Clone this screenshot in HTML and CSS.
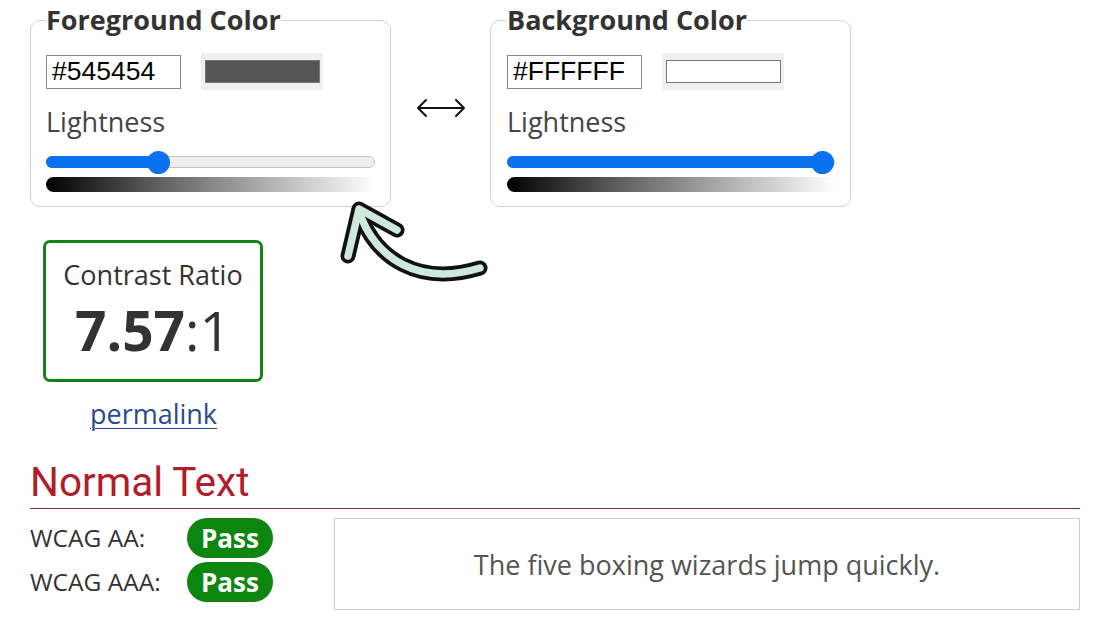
FILE: index.html
```html
<!DOCTYPE html>
<html lang="en">
<head>
<meta charset="utf-8">
<title>Contrast Checker</title>
<link rel="stylesheet" href="styles.css">
</head>
<body>
<main class="page">
  <section class="pickers">
    <fieldset class="picker">
      <legend>Foreground Color</legend>
      <div class="color-row">
        <input class="hex" type="text" value="#545454">
        <div class="swatch"><div class="swatch-fill fg-fill"></div></div>
      </div>
      <div class="label">Lightness</div>
      <div class="slider">
        <div class="fill" style="width: 34%"></div>
        <div class="thumb" style="left: 34%"></div>
      </div>
      <div class="gradient"></div>
    </fieldset>

    <div class="swap">
      <svg width="52" height="20" viewBox="0 0 52 20" aria-hidden="true">
        <path d="M3 10 H49 M11 2 L3 10 L11 18 M41 2 L49 10 L41 18" fill="none" stroke="#111" stroke-width="2" stroke-linecap="round" stroke-linejoin="round"/>
      </svg>
    </div>

    <fieldset class="picker picker-bg">
      <legend>Background Color</legend>
      <div class="color-row">
        <input class="hex" type="text" value="#FFFFFF">
        <div class="swatch"><div class="swatch-fill bg-fill"></div></div>
      </div>
      <div class="label">Lightness</div>
      <div class="slider">
        <div class="fill" style="width: 96.6%"></div>
        <div class="thumb" style="left: 96.6%"></div>
      </div>
      <div class="gradient"></div>
    </fieldset>
  </section>

  <svg class="pointer" width="170" height="100" viewBox="0 0 170 100" aria-hidden="true">
    <g fill="none" stroke-linecap="round" stroke-linejoin="round">
      <path d="M18 61 L29 14 L67 35" stroke="#111" stroke-width="15"/>
      <path d="M31 22 C47 62 87 92 150 73" stroke="#111" stroke-width="15"/>
      <path d="M18 61 L29 14 L67 35" stroke="#cfe8dd" stroke-width="7.5"/>
      <path d="M31 22 C47 62 87 92 150 73" stroke="#cfe8dd" stroke-width="7.5"/>
    </g>
  </svg>

  <section class="result">
    <div class="ratio-box">
      <div class="ratio-title">Contrast Ratio</div>
      <div class="ratio-value"><b>7.57</b>:1</div>
    </div>
    <a class="permalink" href="#">permalink</a>
  </section>

  <h2 class="section-title">Normal Text</h2>
  <section class="checks">
    <div class="levels">
      <div class="level"><span class="level-name">WCAG AA:</span><span class="badge">Pass</span></div>
      <div class="level"><span class="level-name">WCAG AAA:</span><span class="badge">Pass</span></div>
    </div>
    <div class="sample">The five boxing wizards jump quickly.</div>
  </section>
</main>
</body>
</html>
```
FILE: styles.css
```css
* { box-sizing: border-box; }

html, body {
  margin: 0;
  background: #fff;
}

body {
  font-family: "Open Sans", "Liberation Sans", sans-serif;
  color: #333;
}

.page {
  position: relative;
  width: 1050px;
  margin-left: 30px;
  padding-top: 4px;
}

.pickers {
  display: flex;
  align-items: center;
}

.picker {
  width: 361px;
  margin: 0;
  padding: 0 15px 14px 15px;
  border: 1px solid #d2d2d2;
  border-radius: 10px;
  min-width: 0;
}

.picker-bg {
  padding-left: 16px;
  padding-right: 15px;
}

.picker legend {
  padding: 0;
  font-size: 27px;
  font-weight: 700;
  line-height: 32px;
  color: #333;
}

.color-row {
  display: flex;
  align-items: center;
  gap: 20px;
  margin-top: 17px;
  height: 37px;
}

.hex {
  width: 135px;
  height: 34px;
  margin: 0;
  padding: 0 5px;
  border: 1px solid #8a8a8a;
  border-radius: 0;
  font-family: "Liberation Sans", Arial, sans-serif;
  font-size: 26.5px;
  color: #000;
  background: #fff;
  outline: none;
}

.swatch {
  width: 122px;
  height: 37px;
  padding: 7px 3px 7px 4px;
  background: #efefef;
}

.swatch-fill {
  width: 100%;
  height: 100%;
  border: 1px solid #777;
}

.fg-fill { background: #545454; }
.bg-fill { background: #ffffff; }

.label {
  margin-top: 15px;
  font-size: 27px;
  line-height: 34px;
  color: #444;
}

.slider {
  position: relative;
  margin-top: 17px;
  height: 12px;
  border: 1px solid #c4c4c4;
  border-radius: 6px;
  background: #efefef;
}

.fill {
  height: 12px;
  margin: -1px 0 0 -1px;
  border-radius: 6px 0 0 6px;
  background: #0b72ef;
}

.thumb {
  position: absolute;
  top: 50%;
  width: 23px;
  height: 23px;
  margin: -11.5px 0 0 -11.5px;
  border-radius: 50%;
  background: #0b72ef;
}

.gradient {
  margin-top: 9px;
  height: 15px;
  border-radius: 8px 0 0 8px;
  background: linear-gradient(to right, #000 0%, #555 30%, #aaa 65%, #fff 100%);
}

.swap {
  width: 99px;
  display: flex;
  justify-content: center;
  padding-top: 4px;
}

.pointer {
  position: absolute;
  left: 300px;
  top: 195px;
}

.result {
  width: 233px;
  margin-top: 33px;
  display: flex;
  flex-direction: column;
  align-items: center;
}

.ratio-box {
  margin-left: 13px;
  width: 220px;
  height: 142px;
  border: 3px solid #18801b;
  border-radius: 7px;
  padding-top: 14px;
  text-align: center;
  color: #333;
}

.ratio-title {
  font-size: 27px;
  line-height: 36px;
}

.ratio-value {
  margin-top: 4px;
  font-size: 55px;
  line-height: 66px;
}

.ratio-value b { font-weight: 700; }

.permalink {
  margin: 14px 0 0 14px;
  font-size: 27px;
  line-height: 36px;
  color: #2a4a8c;
  text-decoration: underline;
  text-underline-offset: 4px;
  text-decoration-thickness: 1px;
}

.section-title {
  margin: 26px 0 0 0;
  padding-bottom: 2px;
  font-family: Roboto, "Liberation Sans", sans-serif;
  font-weight: 400;
  font-size: 40.5px;
  line-height: 48px;
  color: #b01e2b;
  border-bottom: 1px solid #8e2f33;
}

.checks {
  display: flex;
  margin-top: 9px;
}

.levels {
  display: flex;
  flex-direction: column;
  gap: 4px;
}

.level {
  display: flex;
  align-items: center;
  height: 40px;
}

.level-name {
  width: 157px;
  font-size: 24.5px;
  line-height: 40px;
  color: #333;
}

.badge {
  width: 86px;
  height: 40px;
  border-radius: 20px;
  background: #0c860e;
  color: #fff;
  font-weight: 700;
  font-size: 26px;
  line-height: 40px;
  text-align: center;
}

.sample {
  margin-left: 61px;
  flex: 1;
  height: 92px;
  border: 1px solid #cfcfcf;
  display: flex;
  align-items: center;
  justify-content: center;
  font-size: 27px;
  color: #545454;
}
```
